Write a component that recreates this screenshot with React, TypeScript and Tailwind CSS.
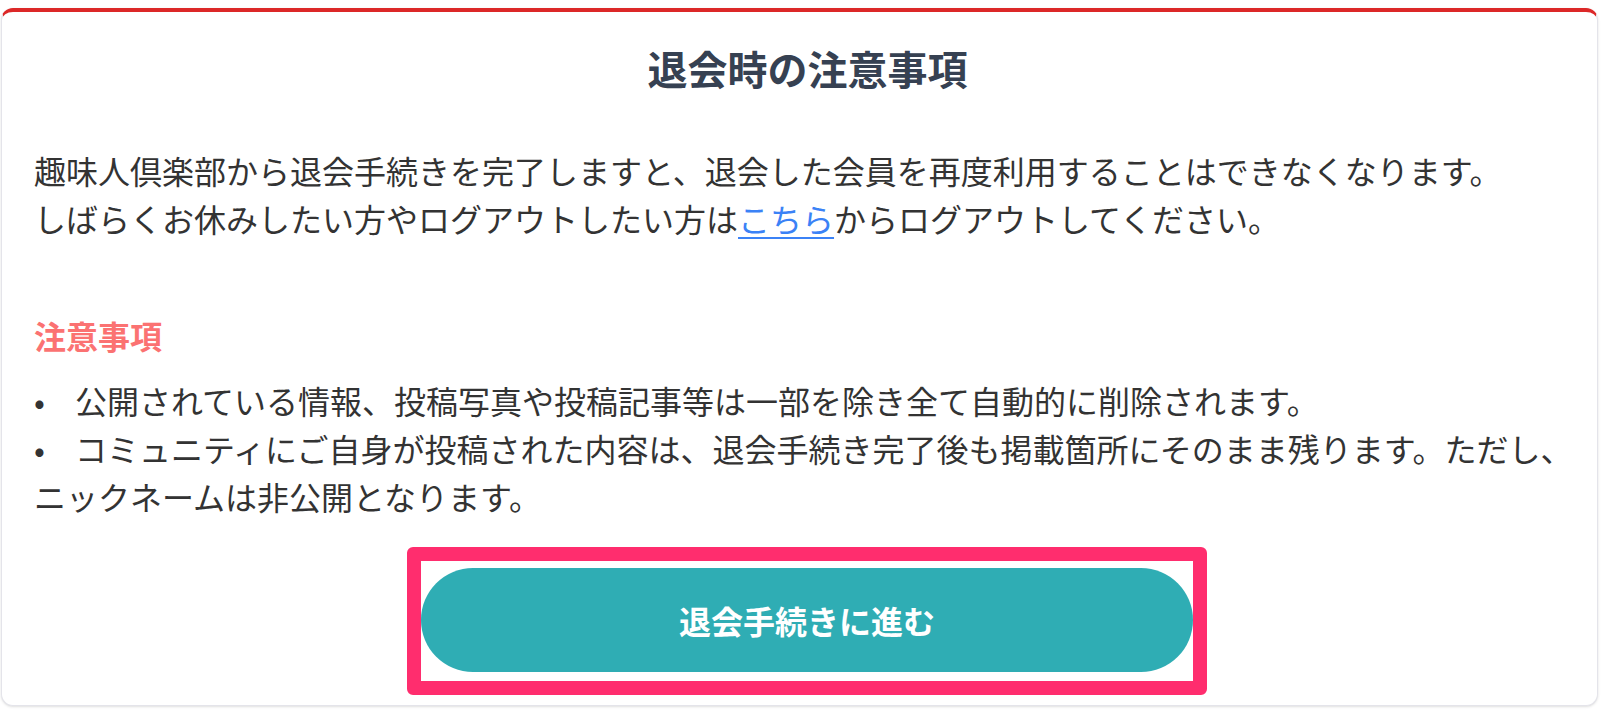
const notes = [
  '公開されている情報、投稿写真や投稿記事等は一部を除き全て自動的に削除されます。',
];

export default function App() {
  return (
    <div className="min-h-screen bg-white pt-2 pl-[1px] pr-[4px] font-['Noto_Sans_CJK_JP','Noto_Sans',sans-serif] text-[#333333]">
      <div className="rounded-xl border border-t-4 border-[#e4e4ea] border-t-[#dc2828] bg-white pl-[32px] pr-[16px] pb-[10px] shadow-sm">
        <h1 className="pt-[26px] pb-[7px] text-center text-[40px] font-bold leading-[60px] text-[#364152]">
          退会時の注意事項
        </h1>

        <p className="mt-[41px] text-[32px] leading-[48px]">
          趣味人倶楽部から退会手続きを完了しますと、退会した会員を再度利用することはできなくなります。
          <br />
          しばらくお休みしたい方やログアウトしたい方は
          <a href="#" className="text-[#3b82f6] underline decoration-2 underline-offset-[5px]">
            こちら
          </a>
          からログアウトしてください。
        </p>

        <h2 className="mt-[69px] text-[32px] font-bold leading-[48px] text-[#fb7272]">注意事項</h2>

        <ul className="mt-[17px] text-[32px] leading-[48px]">
          {notes.map((n) => (
            <li key={n} className="whitespace-nowrap">
              <span className="inline-block w-[41px]">•</span>
              {n}
            </li>
          ))}
          <li className="whitespace-nowrap">
            <span className="inline-block w-[41px]">•</span>
            コミュニティにご自身が投稿された内容は、退会手続き完了後も掲載箇所にそのまま残ります。ただし、
            <br />
            ニックネームは非公開となります。
          </li>
        </ul>

        <div className="mt-[27px] flex justify-center pr-[1px]">
          <div className="w-[800px] rounded-[6px] border-[14px] border-[#ff2d6e] pt-[7px] pb-[9px]">
            <button
              type="button"
              className="flex h-[104px] w-full items-center justify-center rounded-full bg-[#2fadb4] text-[32px] font-bold text-white"
            >
              退会手続きに進む
            </button>
          </div>
        </div>
      </div>
    </div>
  );
}
